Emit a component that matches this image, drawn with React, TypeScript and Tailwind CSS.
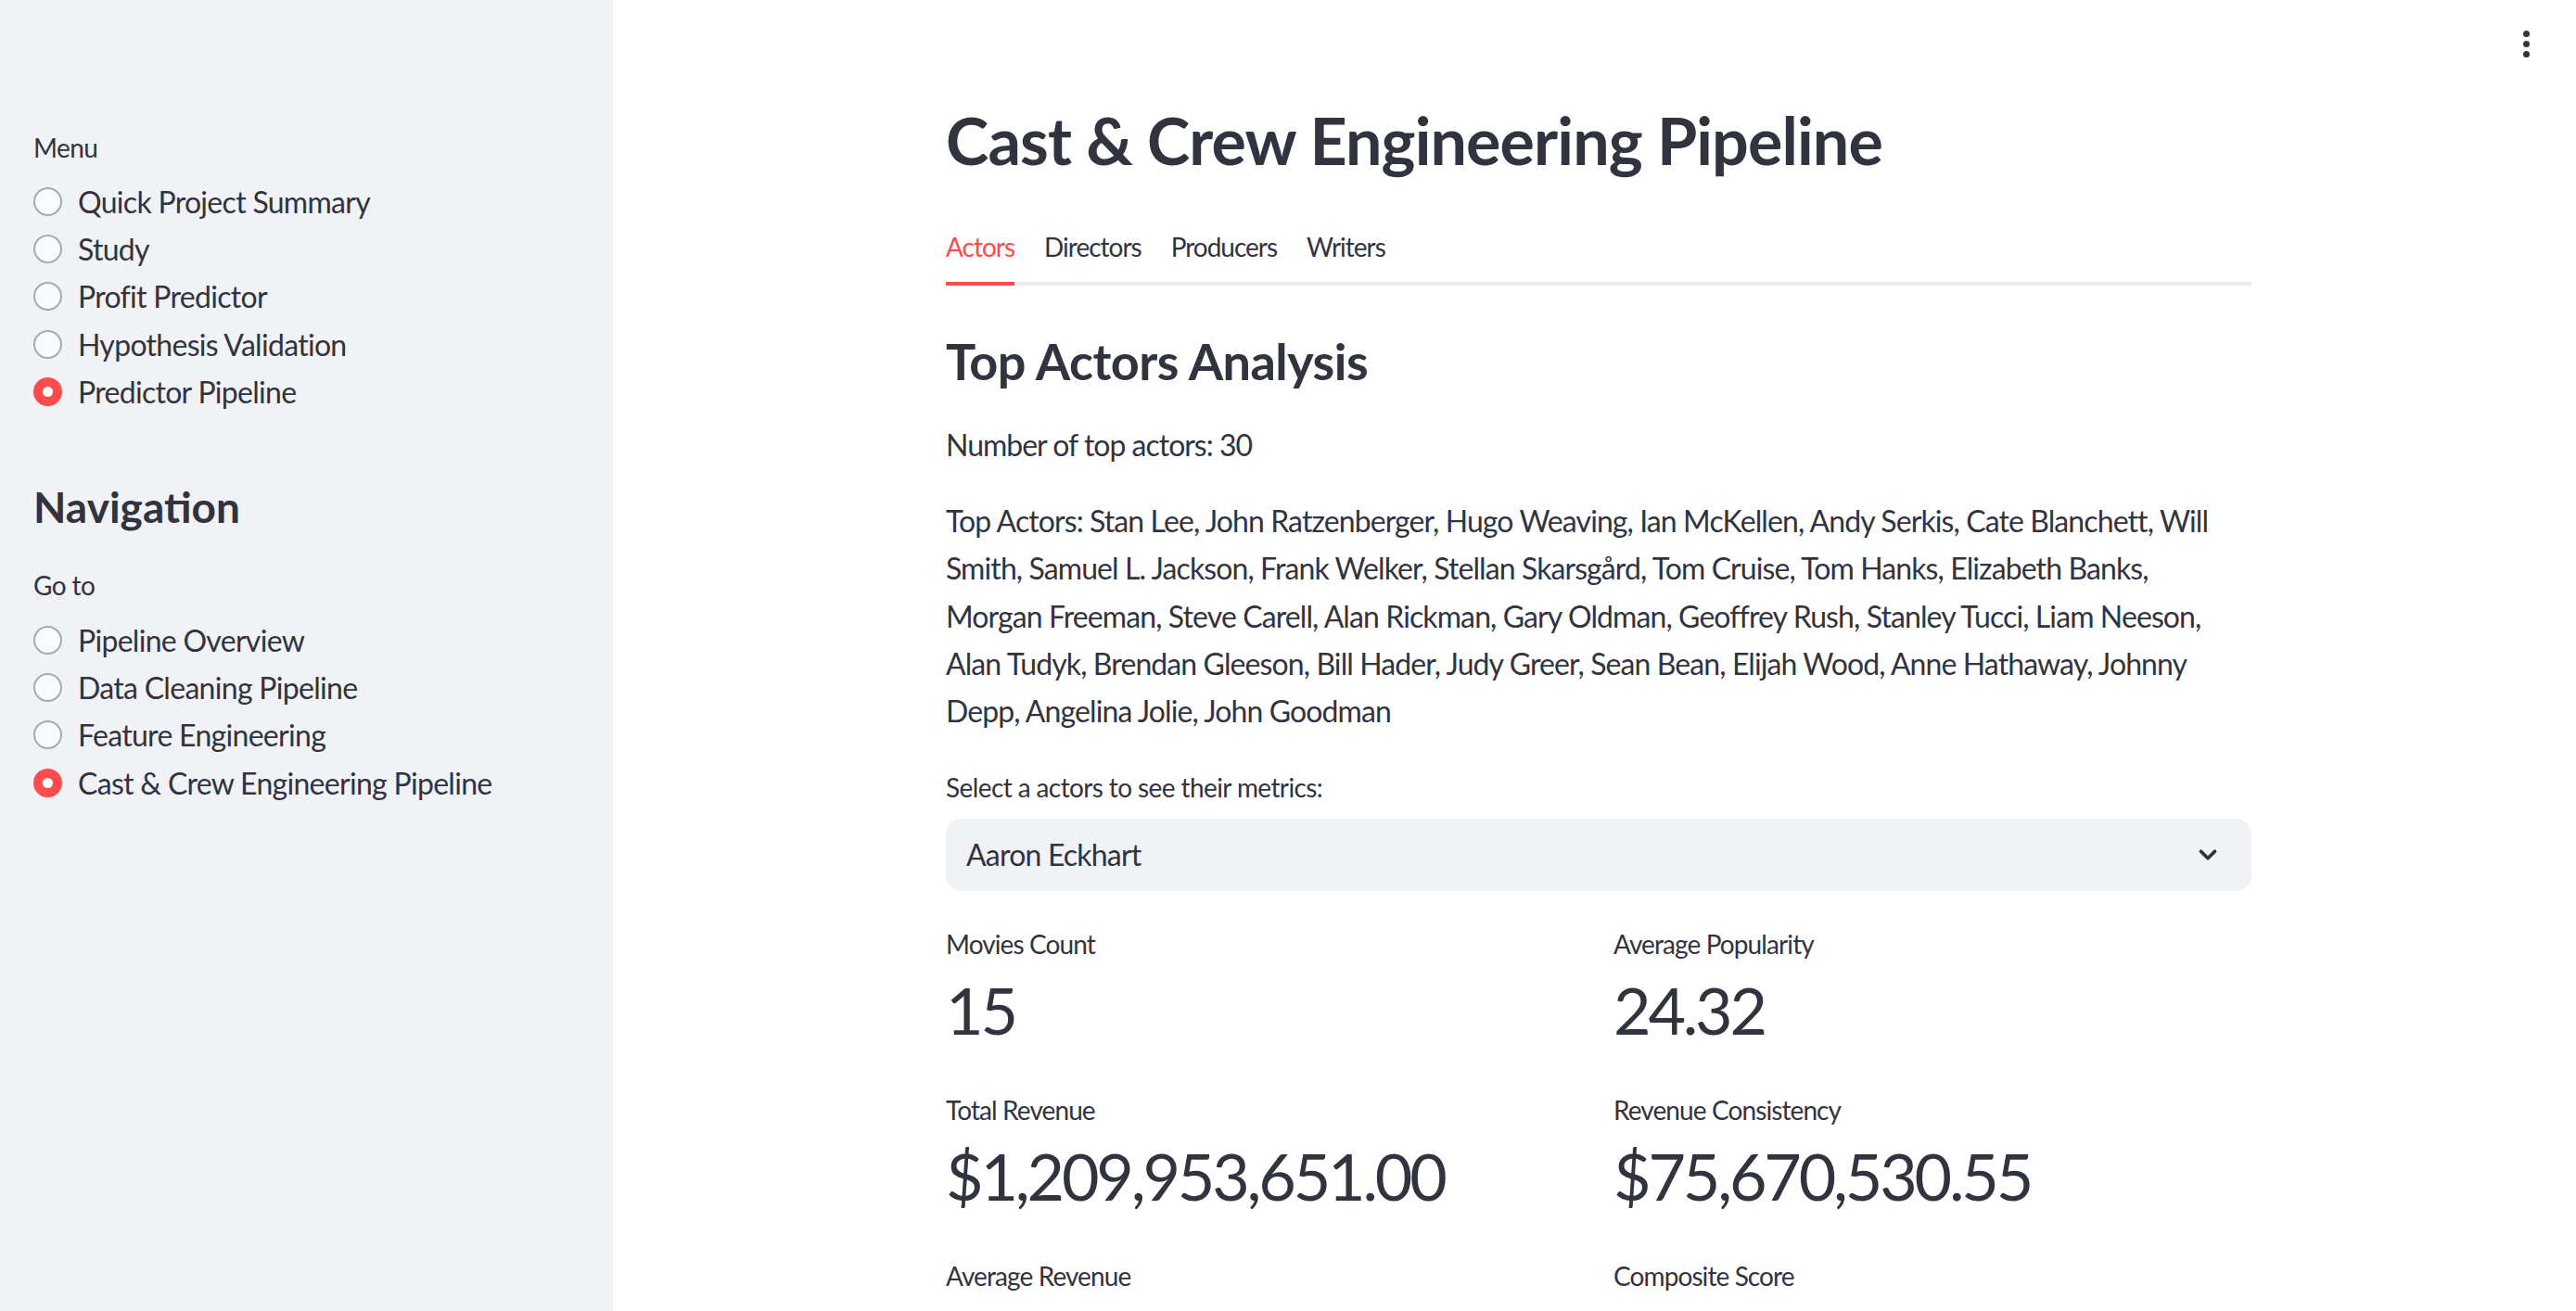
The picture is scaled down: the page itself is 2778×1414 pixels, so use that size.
import React from 'react';
import { ChevronDown } from 'lucide-react';

const font = { fontFamily: 'Lato, "Noto Sans", sans-serif' };

const menuItems = ['Quick Project Summary', 'Study', 'Profit Predictor', 'Hypothesis Validation', 'Predictor Pipeline'];
const navItems = ['Pipeline Overview', 'Data Cleaning Pipeline', 'Feature Engineering', 'Cast & Crew Engineering Pipeline'];

// kept as separate lines so the wrap matches the original
const topActorLines = [
  'Top Actors: Stan Lee, John Ratzenberger, Hugo Weaving, Ian McKellen, Andy Serkis, Cate Blanchett, Will',
  'Smith, Samuel L. Jackson, Frank Welker, Stellan Skarsgård, Tom Cruise, Tom Hanks, Elizabeth Banks,',
  'Morgan Freeman, Steve Carell, Alan Rickman, Gary Oldman, Geoffrey Rush, Stanley Tucci, Liam Neeson,',
  'Alan Tudyk, Brendan Gleeson, Bill Hader, Judy Greer, Sean Bean, Elijah Wood, Anne Hathaway, Johnny',
  'Depp, Angelina Jolie, John Goodman',
];

const metrics = [
  { label: 'Movies Count', value: '15' },
  { label: 'Average Popularity', value: '24.32' },
  { label: 'Total Revenue', value: '$1,209,953,651.00' },
  { label: 'Revenue Consistency', value: '$75,670,530.55' },
  { label: 'Average Revenue', value: '' },
  { label: 'Composite Score', value: '' },
];

function Radio({ label, checked }: { label: string; checked?: boolean }) {
  return (
    <div className="flex items-center h-[51.2px]">
      {checked ? (
        <span className="flex items-center justify-center w-[31px] h-[31px] rounded-full bg-[#ff4b4b]">
          <span className="w-[11px] h-[11px] rounded-full bg-white" />
        </span>
      ) : (
        <span className="w-[31px] h-[31px] rounded-full border-[2px] border-[#a6a9b2] bg-[#f9fafb]" />
      )}
      <span className="ml-[17px] text-[32px] leading-[51.2px] tracking-[-0.7px] text-[#31333f]">{label}</span>
    </div>
  );
}

function Sidebar() {
  return (
    <aside className="w-[661px] shrink-0 h-full bg-[#f0f2f6] pl-[36px] pt-[139px]">
      <div className="text-[28px] leading-[40px] tracking-[-0.6px] text-[#31333f]">Menu</div>
      <div className="mt-[13px]">
        {menuItems.map((m) => (
          <Radio key={m} label={m} checked={m === 'Predictor Pipeline'} />
        ))}
      </div>
      <h2 className="mt-[71px] text-[46px] leading-[56px] font-bold text-[#31333f]">Navigation</h2>
      <div className="mt-[36px] text-[28px] leading-[40px] tracking-[-0.6px] text-[#31333f]">Go to</div>
      <div className="mt-[14px]">
        {navItems.map((m) => (
          <Radio key={m} label={m} checked={m === 'Cast & Crew Engineering Pipeline'} />
        ))}
      </div>
    </aside>
  );
}

export default function App() {
  return (
    <div className="flex w-[2778px] h-[1414px] overflow-hidden bg-white text-[#31333f]" style={font}>
      <Sidebar />
      <main className="relative flex-1 h-full">
        <div className="absolute right-[50px] top-[33px] flex flex-col gap-[4px]">
          <span className="w-[7px] h-[7px] rounded-full bg-[#31333f]" />
          <span className="w-[7px] h-[7px] rounded-full bg-[#31333f]" />
          <span className="w-[7px] h-[7px] rounded-full bg-[#31333f]" />
        </div>

        <div className="w-[1408px] ml-[359px] pt-[108px]">
          <h1 className="text-[70px] leading-[86px] font-bold tracking-[-0.9px]">Cast &amp; Crew Engineering Pipeline</h1>

          <div className="mt-[52px] flex gap-[32px] border-b-[4px] border-[#eaeaec]">
            {['Actors', 'Directors', 'Producers', 'Writers'].map((t, i) => (
              <div
                key={t}
                className={
                  i === 0
                    ? 'text-[28px] leading-[40px] tracking-[-1px] pb-[18px] -mb-[4px] border-b-[4px] border-[#ff4b4b] text-[#ff4b4b]'
                    : 'text-[28px] leading-[40px] tracking-[-1px] pb-[18px] text-[#31333f]'
                }
              >
                {t}
              </div>
            ))}
          </div>

          <h2 className="mt-[48px] text-[54px] leading-[68px] font-bold tracking-[-0.55px]">Top Actors Analysis</h2>

          <p className="mt-[30px] text-[32px] leading-[51.2px] tracking-[-1px]">Number of top actors: 30</p>
          <p className="mt-[31px] text-[32px] leading-[51.2px] tracking-[-0.9px]">
            {topActorLines.map((l) => (
              <span key={l} className="block whitespace-nowrap">
                {l}
              </span>
            ))}
          </p>

          <div className="mt-[37px] text-[28px] leading-[40px] tracking-[-0.6px]">Select a actors to see their metrics:</div>
          <div className="mt-[14px] h-[78px] rounded-[16px] bg-[#f0f2f6] flex items-center justify-between pl-[22px] pr-[32px]">
            <span className="text-[32px] tracking-[-0.8px]">Aaron Eckhart</span>
            <ChevronDown size={30} strokeWidth={3} className="text-[#31333f]" />
          </div>

          <div className="grid grid-cols-2 gap-x-[32px] mt-[37px]">
            {metrics.map((m, i) => (
              <div key={m.label} className={i >= 2 ? 'mt-[45px]' : ''}>
                <div className="text-[28px] leading-[40px] tracking-[-0.9px]">{m.label}</div>
                {m.value && <div className="mt-[8px] text-[70px] leading-[86px] tracking-[-3.2px]">{m.value}</div>}
              </div>
            ))}
          </div>
        </div>
      </main>
    </div>
  );
}
